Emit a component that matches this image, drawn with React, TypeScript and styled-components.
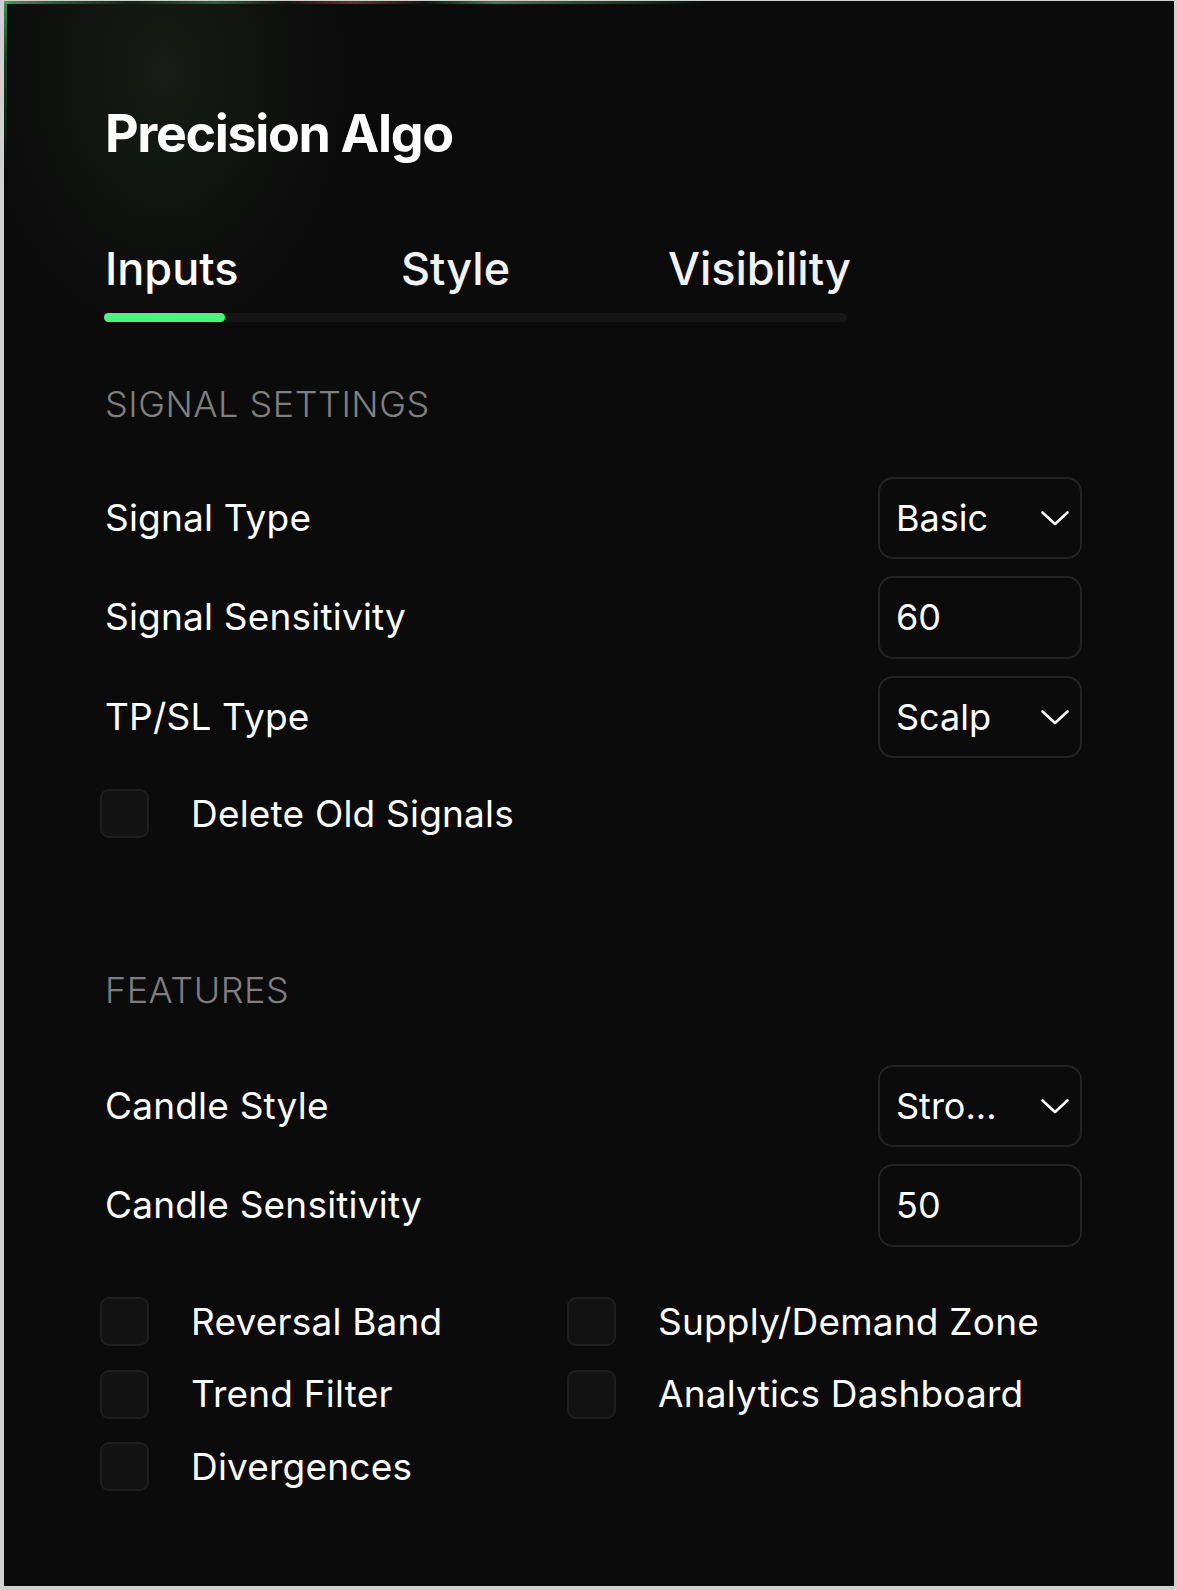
import React from "react";
import styled, { createGlobalStyle } from "styled-components";

const GlobalStyle = createGlobalStyle`
  html, body {
    margin: 0;
    padding: 0;
    background: #d0d0d0;
  }
  body {
    font-family: Inter, "Noto Sans", "Liberation Sans", sans-serif;
    -webkit-font-smoothing: antialiased;
  }
  * { box-sizing: border-box; }
`;

const Page = styled.div`
  padding: 1px 3px 4px 4px;
`;

const Panel = styled.main`
  width: 1170px;
  padding: 107px 92px 95px 101px;
  color: #ffffff;
  background:
    linear-gradient(
        90deg,
        rgba(75, 160, 100, 0.95) 0%,
        rgba(60, 130, 85, 0.7) 4%,
        rgba(35, 45, 40, 0.4) 11%,
        rgba(60, 125, 85, 0.7) 18%,
        rgba(40, 40, 40, 0.3) 24%,
        rgba(150, 55, 55, 0.75) 30%,
        rgba(40, 40, 40, 0.3) 36%,
        rgba(65, 145, 95, 0.85) 42%,
        rgba(30, 30, 30, 0) 60%
      )
      top left / 100% 3px no-repeat,
    linear-gradient(
        180deg,
        rgba(65, 145, 90, 0.95) 0,
        rgba(45, 95, 60, 0.55) 60px,
        rgba(20, 30, 25, 0) 170px
      )
      top left / 3px 100% no-repeat,
    radial-gradient(
      ellipse 180px 260px at 160px 70px,
      rgba(45, 60, 45, 0.35),
      rgba(11, 11, 11, 0) 100%
    ),
    #0b0b0b;
`;

const Title = styled.h1`
  margin: 0 0 87px;
  font-size: 52px;
  line-height: 52px;
  font-weight: 700;
  letter-spacing: -1.35px;
  color: #ffffff;
`;

const TabBar = styled.nav`
  display: grid;
  grid-template-columns: 296px 267px auto;
  align-items: end;
`;

const Tab = styled.button<{ $active?: boolean }>`
  all: unset;
  font-family: Inter, "Noto Sans", sans-serif;
  font-size: 45px;
  line-height: 43px;
  font-weight: 500;
  letter-spacing: 0;
  color: ${(p) => (p.$active ? "#ffffff" : "#f2f2f2")};
  cursor: pointer;
  justify-self: start;
`;

const Track = styled.div`
  margin: 23px 0 0 -1px;
  width: 743px;
  height: 9px;
  border-radius: 5px;
  background: #161616;
  display: flex;
`;

const Indicator = styled.div`
  width: 121px;
  height: 100%;
  border-radius: 5px;
  background: #4bf47d;
`;

const SectionTitle = styled.h2<{ $top: number; $bottom: number }>`
  margin: ${(p) => p.$top}px 0 ${(p) => p.$bottom}px;
  font-size: 36px;
  line-height: 34px;
  font-weight: 300;
  letter-spacing: 0.5px;
  text-transform: uppercase;
  color: #7f7f7f;
`;

const Fields = styled.div`
  display: flex;
  flex-direction: column;
  gap: 17px;
`;

const FieldRow = styled.div`
  display: flex;
  align-items: center;
  justify-content: space-between;
  height: 82.5px;
`;

const FieldLabel = styled.span`
  font-size: 37px;
  line-height: 40px;
  font-weight: 400;
  letter-spacing: 0.2px;
  color: #ffffff;
`;

const Control = styled.div`
  width: 204px;
  height: 100%;
  display: flex;
  align-items: center;
  justify-content: space-between;
  gap: 8px;
  padding: 0 10px 0 16px;
  border: 2px solid #242424;
  border-radius: 15px;
  background: #0b0b0b;
`;

const ControlValue = styled.span`
  font-size: 36px;
  line-height: 44px;
  font-weight: 400;
  color: #ffffff;
  white-space: nowrap;
`;

const ChevronIcon = styled.svg`
  flex: none;
  width: 30px;
  height: 16px;
`;

const CheckRow = styled.label<{ $top?: number }>`
  display: flex;
  align-items: center;
  gap: 42px;
  height: 49px;
  margin-top: ${(p) => p.$top ?? 0}px;
  margin-left: -5px;
`;

const CheckBox = styled.span`
  flex: none;
  width: 49px;
  height: 49px;
  border: 2.5px solid #1e1e1e;
  border-radius: 9px;
  background: #121212;
`;

const CheckLabel = styled.span`
  font-size: 37px;
  line-height: 40px;
  font-weight: 400;
  letter-spacing: 0.2px;
  color: #ffffff;
  white-space: nowrap;
`;

const CheckGrid = styled.div`
  display: grid;
  grid-template-columns: 467px 1fr;
  row-gap: 23.5px;
  margin-top: 50.5px;
`;

const Chevron = () => (
  <ChevronIcon viewBox="0 0 30 16" fill="none">
    <polyline
      points="2.5,2.5 15,14 27.5,2.5"
      stroke="#ffffff"
      strokeWidth="2.6"
      strokeLinecap="round"
      strokeLinejoin="round"
    />
  </ChevronIcon>
);

type Field = { label: string; value: string; select?: boolean };

const signalFields: Field[] = [
  { label: "Signal Type", value: "Basic", select: true },
  { label: "Signal Sensitivity", value: "60" },
  { label: "TP/SL Type", value: "Scalp", select: true },
];

const featureFields: Field[] = [
  { label: "Candle Style", value: "Stro...", select: true },
  { label: "Candle Sensitivity", value: "50" },
];

const features = [
  "Reversal Band",
  "Supply/Demand Zone",
  "Trend Filter",
  "Analytics Dashboard",
  "Divergences",
];

const FieldList = ({ fields }: { fields: Field[] }) => (
  <Fields>
    {fields.map((f) => (
      <FieldRow key={f.label}>
        <FieldLabel>{f.label}</FieldLabel>
        <Control>
          <ControlValue>{f.value}</ControlValue>
          {f.select && <Chevron />}
        </Control>
      </FieldRow>
    ))}
  </Fields>
);

export default function App() {
  return (
    <>
      <GlobalStyle />
      <Page>
        <Panel>
          <Title>Precision Algo</Title>
          <TabBar>
            <Tab $active>Inputs</Tab>
            <Tab>Style</Tab>
            <Tab>Visibility</Tab>
          </TabBar>
          <Track>
            <Indicator />
          </Track>

          <SectionTitle $top={64.5} $bottom={56}>
            Signal Settings
          </SectionTitle>
          <FieldList fields={signalFields} />
          <CheckRow $top={31}>
            <CheckBox />
            <CheckLabel>Delete Old Signals</CheckLabel>
          </CheckRow>

          <SectionTitle $top={135} $bottom={57.5}>
            Features
          </SectionTitle>
          <FieldList fields={featureFields} />
          <CheckGrid>
            {features.map((f) => (
              <CheckRow key={f}>
                <CheckBox />
                <CheckLabel>{f}</CheckLabel>
              </CheckRow>
            ))}
          </CheckGrid>
        </Panel>
      </Page>
    </>
  );
}
